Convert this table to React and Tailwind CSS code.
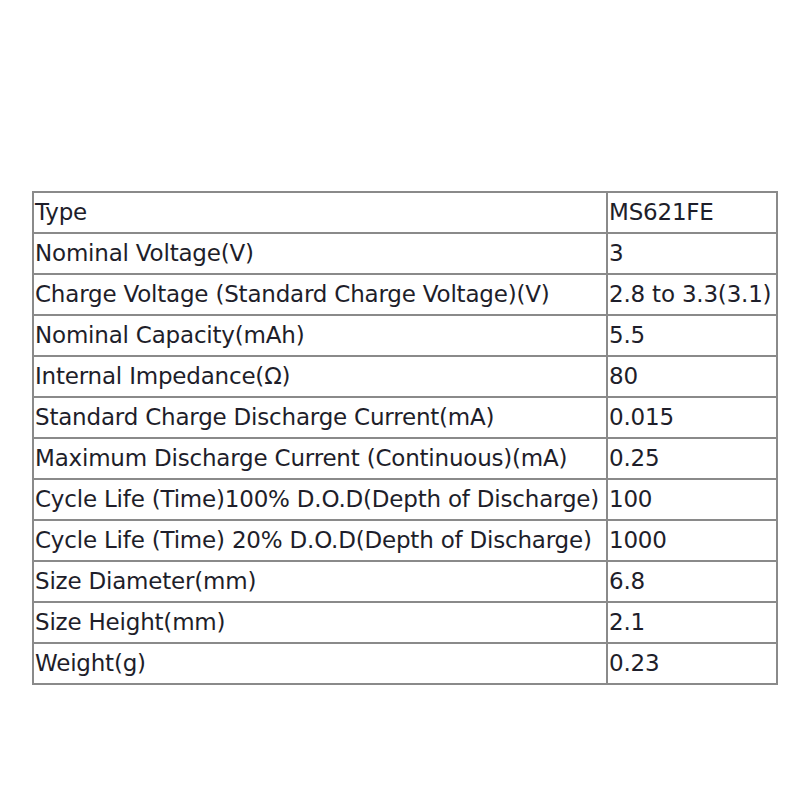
const rows = [
  ['Type', 'MS621FE'],
  ['Nominal Voltage(V)', '3'],
  ['Charge Voltage (Standard Charge Voltage)(V)', '2.8 to 3.3(3.1)'],
  ['Nominal Capacity(mAh)', '5.5'],
  ['Internal Impedance(Ω)', '80'],
  ['Standard Charge Discharge Current(mA)', '0.015'],
  ['Maximum Discharge Current (Continuous)(mA)', '0.25'],
  ['Cycle Life (Time)100% D.O.D(Depth of Discharge)', '100'],
  ['Cycle Life (Time) 20% D.O.D(Depth of Discharge)', '1000'],
  ['Size Diameter(mm)', '6.8'],
  ['Size Height(mm)', '2.1'],
  ['Weight(g)', '0.23'],
]

export default function App() {
  return (
    <div className="w-[800px] h-[800px] bg-white pt-[191px] pl-[32px]">
      <table
        className="border-collapse border-2 border-[#7d7d7d] text-[#1e1e2a] text-[23px] leading-none tracking-[-0.2px]"
        style={{ fontFamily: '"DejaVu Sans", sans-serif' }}
      >
        <tbody>
          {rows.map(([k, v]) => (
            <tr key={k} className="h-[41px]">
              <td className="w-[574px] border-2 border-[#8a8a8a] px-[1px] whitespace-nowrap">{k}</td>
              <td className="w-[170px] border-2 border-[#8a8a8a] px-[1px] whitespace-nowrap">{v}</td>
            </tr>
          ))}
        </tbody>
      </table>
    </div>
  )
}
